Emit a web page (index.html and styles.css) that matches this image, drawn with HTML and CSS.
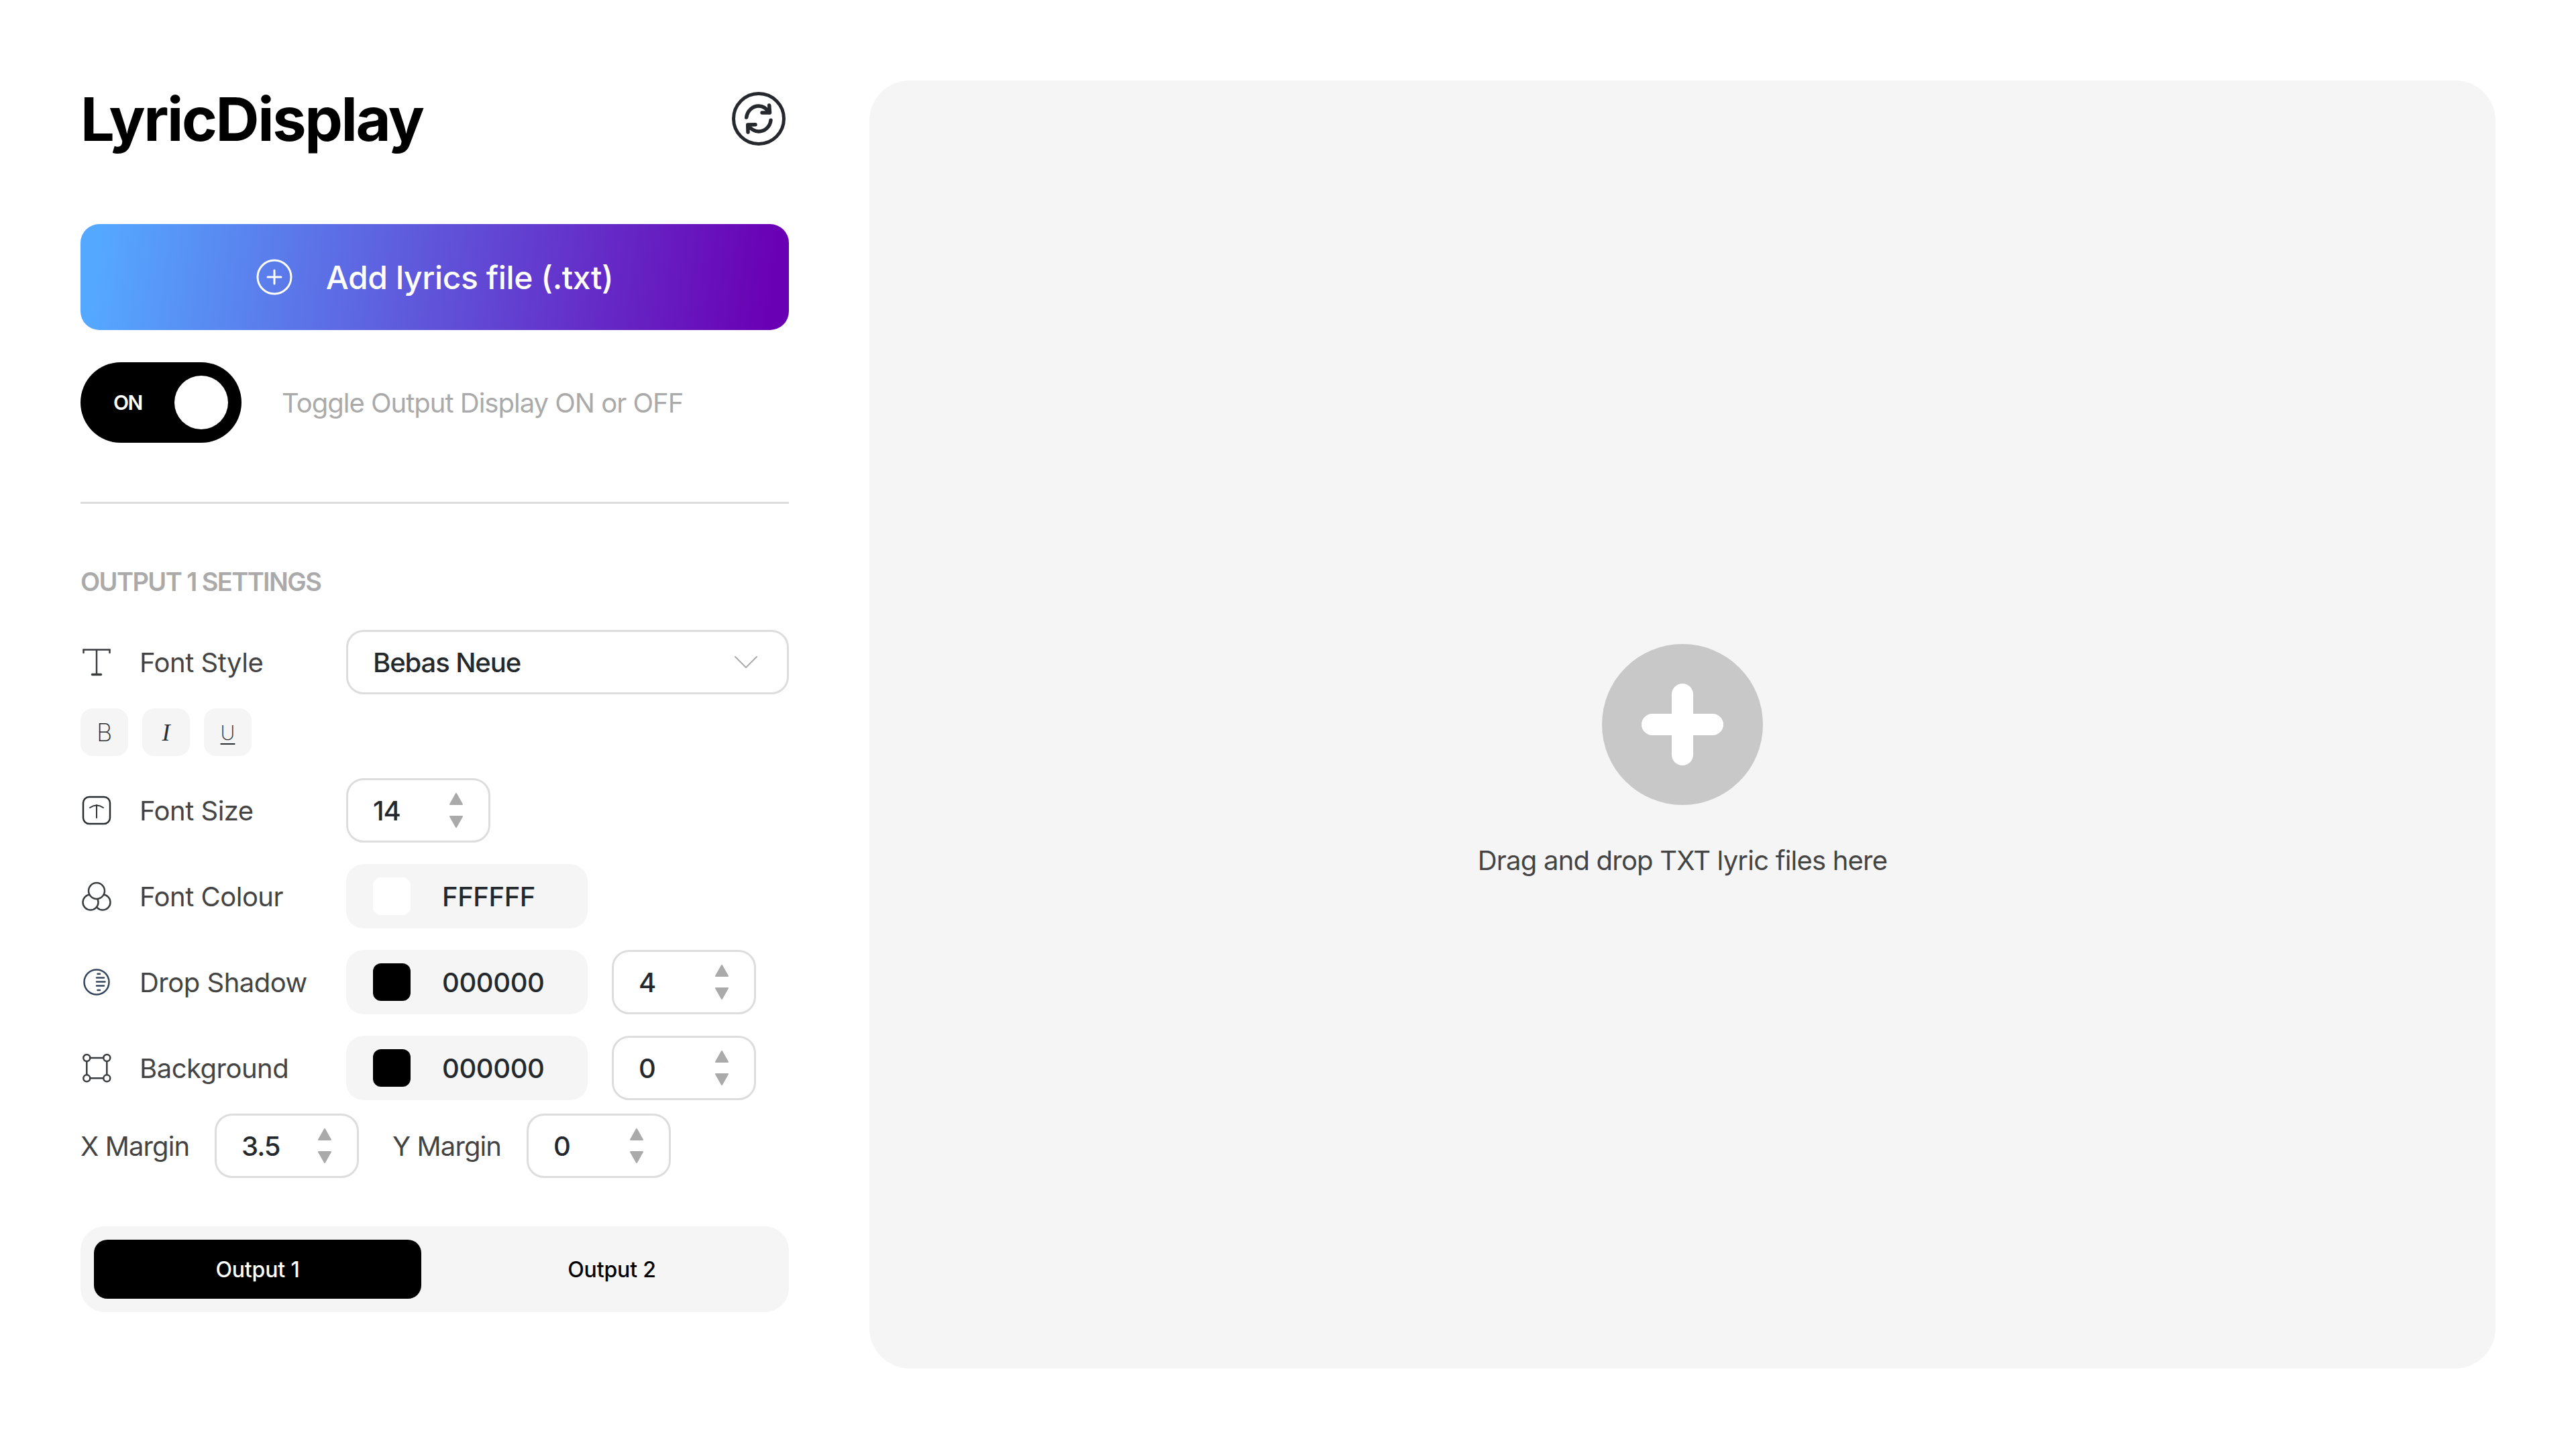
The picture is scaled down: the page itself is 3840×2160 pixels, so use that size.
FILE: index.html
```html
<!DOCTYPE html>
<html>
<head>
    <meta charset="UTF-8">
    <title>LyricDisplay</title>
    <link rel="stylesheet" href="styles.css">
</head>
<body>
<div class="app">
    <aside class="sidebar">
        <header class="top">
            <h1 class="title">LyricDisplay</h1>
            <svg class="sync" viewBox="0 0 80 80" fill="none" stroke="#25292e" stroke-linecap="round" stroke-linejoin="round">
                <circle cx="40" cy="40" r="37.5" stroke-width="5"/>
                <path d="M21.7 38C23 28 31 21 40 21C47 21 52 25 55.7 31M55.7 20L56.5 31L45 31" stroke-width="5.5"/>
                <path d="M58 42.3C57 52 49 59 40 59C33 59 28 55 24 49.5M24 60L23.7 49L35 48.7" stroke-width="5.5"/>
            </svg>
        </header>

        <button class="add-btn">
            <svg class="add-icon" viewBox="0 0 54 54" fill="none" stroke="#fff" stroke-width="3" stroke-linecap="round">
                <circle cx="27" cy="27" r="25"/>
                <path d="M27 17V37M17 27H37"/>
            </svg>
            <span>Add lyrics file (.txt)</span>
        </button>

        <div class="toggle-row">
            <div class="toggle">
                <span class="toggle-text">ON</span>
                <span class="knob"></span>
            </div>
            <span class="toggle-hint">Toggle Output Display ON or OFF</span>
        </div>

        <hr class="divider">

        <h2 class="section-title">OUTPUT 1 SETTINGS</h2>

        <div class="row row-first">
            <div class="row-label">
                <svg class="icon" viewBox="0 0 48 48" fill="none" stroke="#3a3d40" stroke-width="2.5" stroke-linecap="round">
                    <path d="M4.5 10V5.5H43.5V10M24 5.5V42.5"/>
                    <path d="M17.5 42.5H30.5" stroke-width="3.5"/>
                </svg>
                <span>Font Style</span>
            </div>
            <div class="select">
                <span>Bebas Neue</span>
                <svg class="chevron" viewBox="0 0 34 18" fill="none" stroke="#aaa" stroke-width="2" stroke-linecap="round">
                    <path d="M1 1L17 17L33 1"/>
                </svg>
            </div>
        </div>

        <div class="style-btns">
            <button class="style-btn">B</button>
            <button class="style-btn style-i">I</button>
            <button class="style-btn style-u">U</button>
        </div>

        <div class="row row-size">
            <div class="row-label">
                <svg class="icon" viewBox="0 0 48 48" fill="none" stroke="#2b2e31" stroke-width="2.5" stroke-linecap="round">
                    <rect x="4" y="4" width="40" height="40" rx="9"/>
                    <path d="M14 20Q24 13 34 20M24 16V35" stroke-width="2"/>
                </svg>
                <span>Font Size</span>
            </div>
            <div class="number">
                <span>14</span>
                <span class="spin">
                    <svg viewBox="0 0 20 52" fill="#aaa" stroke="#aaa" stroke-width="2" stroke-linejoin="round">
                        <path d="M10 1L19 17H1Z"/>
                        <path d="M1 35H19L10 51Z"/>
                    </svg>
                </span>
            </div>
        </div>

        <div class="row">
            <div class="row-label">
                <svg class="icon" viewBox="0 0 48 48" stroke="#3a3d40" stroke-width="2.5" fill="#fff">
                    <circle cx="33" cy="33" r="11.5"/>
                    <circle cx="15" cy="33" r="11.5"/>
                    <circle cx="24" cy="16" r="12"/>
                </svg>
                <span>Font Colour</span>
            </div>
            <div class="colour">
                <span class="swatch swatch-white"></span>
                <span>FFFFFF</span>
            </div>
        </div>

        <div class="row">
            <div class="row-label">
                <svg class="icon" viewBox="0 0 48 48" fill="none" stroke="#34465c" stroke-width="2.5" stroke-linecap="round">
                    <circle cx="24" cy="24" r="18.5"/>
                    <path d="M25.5 11.7H29M24 17.5H35M24 23.5H36.5M24 29.5H35M25.5 36H29"/>
                </svg>
                <span>Drop Shadow</span>
            </div>
            <div class="colour">
                <span class="swatch"></span>
                <span>000000</span>
            </div>
            <div class="number number-side">
                <span>4</span>
                <span class="spin">
                    <svg viewBox="0 0 20 52" fill="#aaa" stroke="#aaa" stroke-width="2" stroke-linejoin="round">
                        <path d="M10 1L19 17H1Z"/>
                        <path d="M1 35H19L10 51Z"/>
                    </svg>
                </span>
            </div>
        </div>

        <div class="row">
            <div class="row-label">
                <svg class="icon" viewBox="0 0 48 48" fill="none" stroke="#3a3d40" stroke-width="2.5">
                    <path d="M14.3 9H34.5M14.3 39.3H34.5M9.3 14V34.3M39.3 14V34.3"/>
                    <circle cx="9.3" cy="9" r="5"/>
                    <circle cx="39.3" cy="9" r="5"/>
                    <circle cx="9.3" cy="39.3" r="5"/>
                    <circle cx="39.3" cy="39.3" r="5"/>
                </svg>
                <span>Background</span>
            </div>
            <div class="colour">
                <span class="swatch"></span>
                <span>000000</span>
            </div>
            <div class="number number-side">
                <span>0</span>
                <span class="spin">
                    <svg viewBox="0 0 20 52" fill="#aaa" stroke="#aaa" stroke-width="2" stroke-linejoin="round">
                        <path d="M10 1L19 17H1Z"/>
                        <path d="M1 35H19L10 51Z"/>
                    </svg>
                </span>
            </div>
        </div>

        <div class="margins">
            <span class="margin-label">X Margin</span>
            <div class="number">
                <span>3.5</span>
                <span class="spin">
                    <svg viewBox="0 0 20 52" fill="#aaa" stroke="#aaa" stroke-width="2" stroke-linejoin="round">
                        <path d="M10 1L19 17H1Z"/>
                        <path d="M1 35H19L10 51Z"/>
                    </svg>
                </span>
            </div>
            <span class="margin-label margin-label-y">Y Margin</span>
            <div class="number">
                <span>0</span>
                <span class="spin">
                    <svg viewBox="0 0 20 52" fill="#aaa" stroke="#aaa" stroke-width="2" stroke-linejoin="round">
                        <path d="M10 1L19 17H1Z"/>
                        <path d="M1 35H19L10 51Z"/>
                    </svg>
                </span>
            </div>
        </div>

        <div class="tabs">
            <button class="tab tab-active">Output 1</button>
            <button class="tab">Output 2</button>
        </div>
    </aside>

    <main class="dropzone">
        <svg class="drop-plus" viewBox="0 0 240 240">
            <circle cx="120" cy="120" r="120" fill="#c8c8c8"/>
            <path d="M120 75V165M75 120H165" stroke="#fff" stroke-width="32" stroke-linecap="round"/>
        </svg>
        <p class="drop-text">Drag and drop TXT lyric files here</p>
    </main>
</div>
</body>
</html>
```

FILE: styles.css
```css
/* page */
* {
    box-sizing: border-box;
}
body {
    margin: 0;
    background-color: #fff;
    font-family: Inter, "Liberation Sans", sans-serif;
    color: #444;
}
button {
    font-family: inherit;
    border: none;
    cursor: pointer;
}
.app {
    display: flex;
    gap: 120px;
    padding: 120px;
    height: 2160px;
}

/* left column */
.sidebar {
    width: 1056px;
    flex-shrink: 0;
}
.top {
    height: 114px;
    display: flex;
    align-items: center;
    justify-content: space-between;
    padding-right: 5px;
}
.title {
    margin: 0;
    font-size: 90px;
    font-weight: 700;
    letter-spacing: -2.4px;
    color: #000;
}
.sync {
    width: 80px;
    height: 80px;
}

.add-btn {
    margin-top: 100px;
    width: 100%;
    height: 158px;
    display: flex;
    align-items: center;
    justify-content: center;
    gap: 50px;
    border-radius: 28px;
    background: linear-gradient(97deg, #55a8ff 3%, #6a00b4 97%);
    color: #fff;
    font-size: 48px;
    font-weight: 500;
    letter-spacing: -0.4px;
}
.add-icon {
    width: 54px;
    height: 54px;
}

.toggle-row {
    margin-top: 48px;
    display: flex;
    align-items: center;
    gap: 60px;
}
.toggle {
    width: 240px;
    height: 120px;
    border-radius: 60px;
    background-color: #000;
    display: flex;
    align-items: center;
    padding: 0 20px 0 49px;
    justify-content: space-between;
}
.toggle-text {
    color: #fff;
    font-size: 30px;
    font-weight: 600;
    letter-spacing: -1.5px;
}
.knob {
    width: 80px;
    height: 80px;
    border-radius: 50%;
    background-color: #fff;
}
.toggle-hint {
    font-size: 40px;
    letter-spacing: -1px;
    color: #aaa;
}

.divider {
    margin: 88px 0 0;
    border: none;
    height: 3px;
    background-color: #ddd;
}
.section-title {
    margin: 92px 0 0;
    height: 48px;
    line-height: 48px;
    font-size: 38px;
    font-weight: 600;
    letter-spacing: -1.6px;
    color: #aaa;
}

/* settings rows */
.row {
    display: flex;
    align-items: center;
    height: 96px;
    margin-top: 32px;
}
.row-first {
    margin-top: 48px;
}
.row-size {
    margin-top: 33px;
}
.row-label {
    width: 396px;
    display: flex;
    align-items: center;
    gap: 40px;
    font-size: 40px;
    letter-spacing: -0.5px;
}
.icon {
    width: 48px;
    height: 48px;
    flex-shrink: 0;
}

.select {
    flex: 1;
    height: 96px;
    border: 3px solid #ddd;
    border-radius: 26px;
    display: flex;
    align-items: center;
    justify-content: space-between;
    padding: 0 44px 0 37px;
    font-size: 40px;
    font-weight: 500;
    letter-spacing: -1.1px;
    color: #24292e;
}
.chevron {
    width: 34px;
    height: 18px;
}

.style-btns {
    margin-top: 21px;
    display: flex;
    gap: 21px;
}
.style-btn {
    width: 71px;
    height: 71px;
    padding: 0;
    border-radius: 18px;
    background-color: #f5f5f5;
    font-size: 36px;
    font-weight: 200;
    color: #2b2e31;
}
.style-i {
    font-family: "Liberation Serif", serif;
    font-style: italic;
    font-weight: 400;
}
.style-u {
    font-size: 30px;
    text-decoration: underline;
    text-underline-offset: 5px;
    text-decoration-thickness: 2px;
}

.number {
    width: 215px;
    height: 96px;
    border: 3px solid #ddd;
    border-radius: 26px;
    display: flex;
    align-items: center;
    justify-content: space-between;
    padding: 0 38px 0 37px;
    font-size: 40px;
    font-weight: 500;
    letter-spacing: -1px;
    color: #24292e;
}
.number-side {
    margin-left: 36px;
}
.spin {
    display: flex;
}
.spin svg {
    width: 20px;
    height: 52px;
}

.colour {
    width: 360px;
    height: 96px;
    border-radius: 26px;
    background-color: #f5f5f5;
    display: flex;
    align-items: center;
    gap: 47px;
    padding-left: 40px;
    font-size: 40px;
    font-weight: 500;
    letter-spacing: -0.4px;
    color: #24292e;
}
.swatch {
    width: 56px;
    height: 56px;
    border-radius: 12px;
    background-color: #000;
}
.swatch-white {
    background-color: #fff;
}

.margins {
    margin-top: 20px;
    display: flex;
    align-items: center;
}
.margin-label {
    width: 200px;
    font-size: 40px;
    letter-spacing: -0.9px;
}
.margin-label-y {
    width: 250px;
    padding-left: 50px;
}

.tabs {
    margin-top: 72px;
    height: 128px;
    padding: 20px;
    border-radius: 36px;
    background-color: #f5f5f5;
    display: grid;
    grid-template-columns: 1fr 1fr;
    gap: 40px;
}
.tab {
    border-radius: 20px;
    background: none;
    font-size: 32px;
    font-weight: 500;
    letter-spacing: -0.15px;
    color: #000;
}
.tab-active {
    background-color: #000;
    color: #fff;
}

/* drop area */
.dropzone {
    flex: 1;
    border-radius: 60px;
    background-color: #f5f5f5;
    display: flex;
    flex-direction: column;
    align-items: center;
    justify-content: center;
    padding-top: 106px;
}
.drop-plus {
    width: 240px;
    height: 240px;
}
.drop-text {
    margin: 58px 0 0;
    font-size: 40px;
    letter-spacing: -0.8px;
    color: #444;
}
```
